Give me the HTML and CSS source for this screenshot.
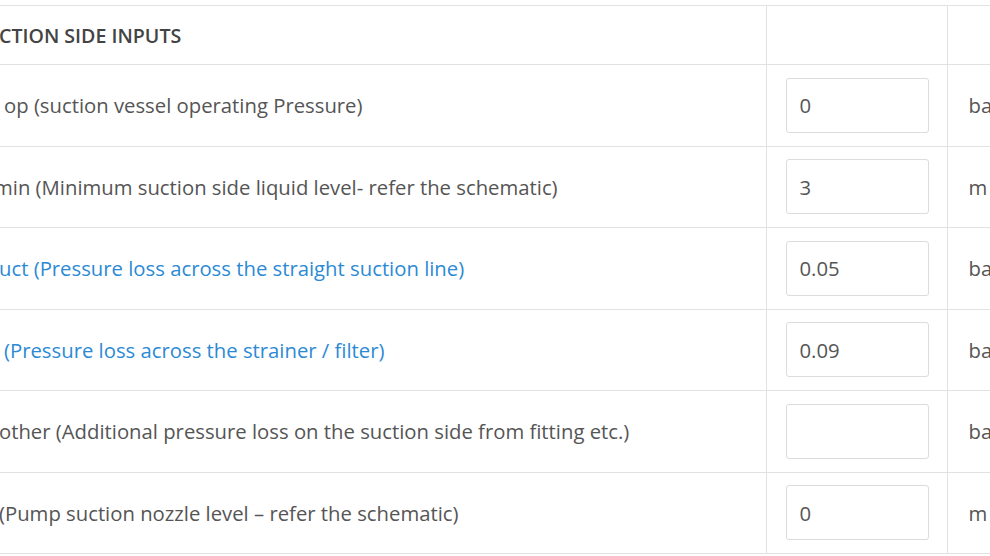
FILE: index.html
```html
<!DOCTYPE html>
<html>
<head>
<meta charset="utf-8">
<link rel="stylesheet" href="styles.css">
</head>
<body>
<div class="frame">
<table class="inputs">
  <colgroup>
    <col class="c-label">
    <col class="c-value">
    <col class="c-unit">
  </colgroup>
  <tr class="head">
    <th class="label">CTION SIDE INPUTS</th>
    <th></th>
    <th></th>
  </tr>
  <tr>
    <td class="label shift">op (suction vessel operating Pressure)</td>
    <td class="value"><input class="field" type="text" value="0"></td>
    <td class="unit">bar</td>
  </tr>
  <tr>
    <td class="label cut">min (Minimum suction side liquid level- refer the schematic)</td>
    <td class="value"><input class="field" type="text" value="3"></td>
    <td class="unit">m</td>
  </tr>
  <tr>
    <td class="label link">uct (Pressure loss across the straight suction line)</td>
    <td class="value"><input class="field" type="text" value="0.05"></td>
    <td class="unit">bar</td>
  </tr>
  <tr>
    <td class="label link shift">(Pressure loss across the strainer / filter)</td>
    <td class="value"><input class="field" type="text" value="0.09"></td>
    <td class="unit">bar</td>
  </tr>
  <tr>
    <td class="label">other (Additional pressure loss on the suction side from fitting etc.)</td>
    <td class="value"><input class="field" type="text" value=""></td>
    <td class="unit">bar</td>
  </tr>
  <tr>
    <td class="label">(Pump suction nozzle level – refer the schematic)</td>
    <td class="value"><input class="field" type="text" value="0"></td>
    <td class="unit">m</td>
  </tr>
</table>
</div>
</body>
</html>
```

FILE: styles.css
```css
html, body {
  margin: 0;
  padding: 0;
  background: #fff;
}
body {
  width: 990px;
  height: 556px;
  overflow: hidden;
  font-family: "Open Sans", "DejaVu Sans", sans-serif;
  color: #555;
}
.frame {
  padding-top: 5px;
}
.inputs {
  border-collapse: collapse;
  table-layout: fixed;
  width: 1149px;
  font-size: 20.3px;
}
.c-label { width: 766px; }
.c-value { width: 181px; }
.c-unit { width: 202px; }
.inputs th,
.inputs td {
  border: 1px solid #e2e2e2;
  padding: 0;
  vertical-align: middle;
  white-space: nowrap;
  overflow: hidden;
}
.inputs th.label,
.inputs td.label {
  border-left: none;
  padding-left: 0;
  text-indent: -1px;
}
.head th {
  height: 58px;
  text-align: left;
  font-weight: 600;
  font-size: 19.6px;
  color: #444;
}
.inputs td {
  height: 80.5px;
}
.inputs td.shift {
  text-indent: 4px;
}
.inputs td.cut {
  text-indent: -6px;
}
.link {
  color: #2b8ad5;
}
.value {
  padding: 0 18px 0 19px !important;
}
.field {
  display: block;
  box-sizing: border-box;
  width: 143px;
  height: 55px;
  border: 1px solid #dcdcdc;
  border-radius: 3px;
  padding: 0 13px;
  margin: 0;
  font-family: "Open Sans", "DejaVu Sans", sans-serif;
  font-size: 20.3px;
  color: #555;
  background: #fff;
  outline: none;
}
.unit {
  padding-left: 21px !important;
}
```
